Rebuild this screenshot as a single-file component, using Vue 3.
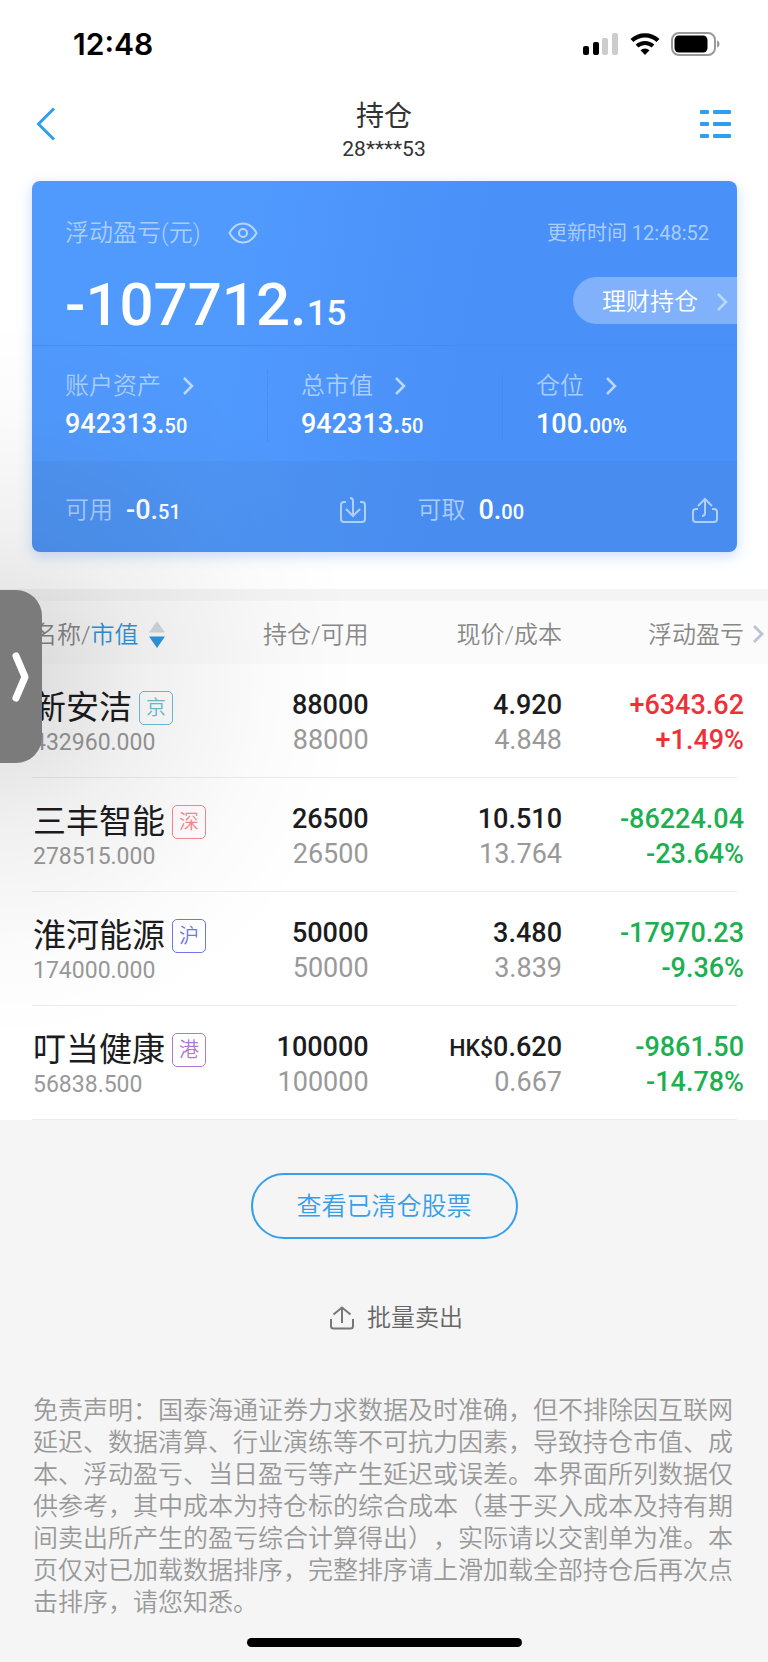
<script setup>
import { ref } from 'vue'

const stats = [
  { label: '账户资产', whole: '942313.', decimal: '50' },
  { label: '总市值', whole: '942313.', decimal: '50' },
  { label: '仓位', whole: '100.', decimal: '00%' },
]

const holdings = ref([
  { name: '新安洁', market: '京', tag: 'bj', value: '432960.000', amount: '88000', usable: '88000', unit: '', price: '4.920', cost: '4.848', profit: '+6343.62', rate: '+1.49%' },
  { name: '三丰智能', market: '深', tag: 'sz', value: '278515.000', amount: '26500', usable: '26500', unit: '', price: '10.510', cost: '13.764', profit: '-86224.04', rate: '-23.64%' },
  { name: '淮河能源', market: '沪', tag: 'sh', value: '174000.000', amount: '50000', usable: '50000', unit: '', price: '3.480', cost: '3.839', profit: '-17970.23', rate: '-9.36%' },
  { name: '叮当健康', market: '港', tag: 'hk', value: '56838.500', amount: '100000', usable: '100000', unit: 'HK$', price: '0.620', cost: '0.667', profit: '-9861.50', rate: '-14.78%' },
])

function trend(profit) {
  return profit.startsWith('+') ? 'up' : 'down'
}
</script>

<template>
  <div class="page" lang="zh-CN">
    <div class="top">
      <div class="status-bar">
        <span class="clock">12:48</span>
        <div class="status-icons">
          <svg width="36" height="22" viewBox="0 0 36 22">
            <rect x="0" y="13" width="6" height="9" rx="2" fill="#000" />
            <rect x="10" y="9" width="6" height="13" rx="2" fill="#000" />
            <rect x="19" y="5" width="6" height="17" rx="2" fill="#ccc" />
            <rect x="29" y="0" width="6" height="22" rx="2" fill="#ccc" />
          </svg>
          <svg width="30" height="22" viewBox="0 0 30 22">
            <path d="M2 7.5a19 19 0 0 1 26 0" fill="none" stroke="#000" stroke-width="4.4" />
            <path d="M7 13a12 12 0 0 1 16 0" fill="none" stroke="#000" stroke-width="4" />
            <path d="M10.5 17.2a6.6 6.6 0 0 1 9 0L15 22z" fill="#000" />
          </svg>
          <svg width="49" height="24" viewBox="0 0 49 24">
            <rect x="1" y="1" width="43" height="22" rx="7" fill="none" stroke="#999" stroke-width="2" />
            <rect x="3.5" y="3.5" width="33" height="17" rx="4.5" fill="#000" />
            <path d="M46 8.5c3.4 1.2 3.4 5.8 0 7z" fill="#999" />
          </svg>
        </div>
      </div>

      <header class="nav">
        <button class="nav-btn" type="button" aria-label="返回">
          <svg width="20" height="34" viewBox="0 0 20 34">
            <path d="M18 1.5L2.5 17L18 32.5" fill="none" stroke="#2f9df0" stroke-width="3" />
          </svg>
        </button>
        <div class="nav-title">
          <h1>持仓</h1>
          <p>28****53</p>
        </div>
        <button class="nav-btn nav-menu" type="button" aria-label="菜单">
          <svg width="32" height="28" viewBox="0 0 32 28" fill="#2f9df0">
            <rect x="0" y="0" width="9" height="4" rx="1" />
            <rect x="13" y="0" width="18" height="4" rx="1" />
            <rect x="0" y="12" width="9" height="4" rx="1" />
            <rect x="13" y="12" width="18" height="4" rx="1" />
            <rect x="0" y="24" width="9" height="4" rx="1" />
            <rect x="13" y="24" width="18" height="4" rx="1" />
          </svg>
        </button>
      </header>

      <section class="card">
        <div class="summary">
          <div class="summary-head">
            <span class="label">浮动盈亏(元)</span>
            <button class="eye" type="button" aria-label="隐藏金额">
              <svg width="30" height="22" viewBox="0 0 30 22" fill="none" stroke="#b9d5fd" stroke-width="2">
                <path d="M1.5 11C5 4.5 9.5 1.5 15 1.5S25 4.5 28.5 11C25 17.5 20.5 20.5 15 20.5S5 17.5 1.5 11z" />
                <circle cx="15" cy="11" r="4" />
              </svg>
            </button>
            <span class="update">更新时间 12:48:52</span>
          </div>
          <div class="summary-body">
            <strong class="total">-107712.<small>15</small></strong>
            <a class="wealth" href="#">
              理财持仓
              <svg class="arrow" width="12" height="20" viewBox="0 0 12 20"><path d="M2 2l8 8l-8 8" /></svg>
            </a>
          </div>
        </div>

        <div class="stats">
          <div v-for="item in stats" :key="item.label" class="stat">
            <a class="label" href="#">
              {{ item.label }}
              <svg class="arrow" width="12" height="20" viewBox="0 0 12 20"><path d="M2 2l8 8l-8 8" /></svg>
            </a>
            <div class="num">{{ item.whole }}<small>{{ item.decimal }}</small></div>
          </div>
        </div>

        <div class="funds">
          <div class="fund">
            <span class="label">可用</span>
            <span class="num">-0.<small>51</small></span>
            <button type="button" aria-label="转入">
              <svg class="line-icon" width="26" height="26" viewBox="0 0 26 26">
                <path d="M6 5H4a3 3 0 0 0-3 3v14a3 3 0 0 0 3 3h18a3 3 0 0 0 3-3V8a3 3 0 0 0-3-3h-2" />
                <path d="M10 1c2 0 3 1 3 3v14M6 12l7 7l7-7" />
              </svg>
            </button>
          </div>
          <div class="fund">
            <span class="label">可取</span>
            <span class="num">0.<small>00</small></span>
            <button type="button" aria-label="转出">
              <svg class="line-icon" width="26" height="26" viewBox="0 0 26 26">
                <path d="M6 12H4a3 3 0 0 0-3 3v7a3 3 0 0 0 3 3h18a3 3 0 0 0 3-3v-7a3 3 0 0 0-3-3h-2" />
                <path d="M10 19c2 0 3-1 3-3V2M6 9l7-7l7 7" />
              </svg>
            </button>
          </div>
        </div>
      </section>
    </div>

    <table class="holdings">
      <thead>
        <tr>
          <th class="col-name">
            <button type="button" class="sort">
              名称/<em>市值</em>
              <svg width="16" height="27" viewBox="0 0 16 27">
                <path d="M8 0l8 11.5H0z" fill="#d0d8e0" />
                <path d="M8 27l8-11.5H0z" fill="#2f96e0" />
              </svg>
            </button>
          </th>
          <th class="col-amount">持仓/可用</th>
          <th>现价/成本</th>
          <th class="col-profit">
            浮动盈亏
            <svg class="more" width="12" height="20" viewBox="0 0 12 20"><path d="M2 2l8 8l-8 8" /></svg>
          </th>
        </tr>
      </thead>
      <tbody>
        <tr v-for="item in holdings" :key="item.name">
          <td class="col-name">
            <div class="name">{{ item.name }}<span class="tag" :class="item.tag">{{ item.market }}</span></div>
            <div class="value">{{ item.value }}</div>
          </td>
          <td>
            <div>{{ item.amount }}</div>
            <div class="sub">{{ item.usable }}</div>
          </td>
          <td>
            <div><span v-if="item.unit" class="unit">{{ item.unit }}</span>{{ item.price }}</div>
            <div class="sub">{{ item.cost }}</div>
          </td>
          <td class="col-profit" :class="trend(item.profit)">
            <div>{{ item.profit }}</div>
            <div>{{ item.rate }}</div>
          </td>
        </tr>
      </tbody>
    </table>

    <div class="actions">
      <button class="cleared" type="button">查看已清仓股票</button>
      <button class="batch" type="button">
        <svg width="26" height="24" viewBox="0 0 26 24" fill="none" stroke="#777" stroke-width="2">
          <path d="M2 13v7a2.5 2.5 0 0 0 2.5 2.5h17a2.5 2.5 0 0 0 2.5-2.5v-7" />
          <path d="M13 17V2M4.5 8.5L13 1.5l8.5 7" />
        </svg>
        批量卖出
      </button>
    </div>

    <p class="disclaimer">免责声明：国泰海通证券力求数据及时准确，但不排除因互联网延迟、数据清算、行业演练等不可抗力因素，导致持仓市值、成本、浮动盈亏、当日盈亏等产生延迟或误差。本界面所列数据仅供参考，其中成本为持仓标的综合成本（基于买入成本及持有期间卖出所产生的盈亏综合计算得出），实际请以交割单为准。本页仅对已加载数据排序，完整排序请上滑加载全部持仓后再次点击排序，请您知悉。</p>

    <div class="home-bar"></div>

    <!-- floating drawer handle and the shade around it -->
    <div class="shade"></div>
    <button class="drawer" type="button" aria-label="展开">
      <svg width="18" height="50" viewBox="0 0 18 50">
        <path d="M4 4l9 21l-9 21" fill="none" stroke="#fff" stroke-width="7" stroke-linecap="round" stroke-linejoin="round" />
      </svg>
    </button>
  </div>
</template>

<style>
body {
  margin: 0;
  background: #f5f5f5;
}
</style>

<style scoped>
.page {
  position: relative;
  overflow: hidden;
  min-height: 100vh;
  font-family: Roboto, "Noto Sans CJK SC", sans-serif;
  font-size: 24px;
  font-weight: 350;
  line-height: 32px;
  color: #1c1c1e;
  background: #f5f5f5;
}

button {
  margin: 0;
  padding: 0;
  border: 0;
  background: none;
  font: inherit;
  color: inherit;
  cursor: pointer;
}

a {
  color: inherit;
  text-decoration: none;
}

svg {
  display: block;
  flex: none;
}

.top {
  padding-bottom: 37px;
  background: #fff;
}

.status-bar {
  display: flex;
  align-items: center;
  justify-content: space-between;
  height: 88px;
  padding: 0 48px 0 73px;
}

.clock {
  font-family: Inter, sans-serif;
  font-size: 30px;
  font-weight: 600;
  color: #000;
}

.status-icons {
  display: flex;
  align-items: center;
  gap: 11px;
}

.nav {
  display: flex;
  align-items: flex-start;
  justify-content: space-between;
  height: 93px;
  padding: 0 36px;
}

.nav-btn {
  display: flex;
  align-items: center;
  width: 48px;
  height: 72px;
}

.nav-menu {
  justify-content: flex-end;
}

.nav-title {
  padding-top: 12px;
  text-align: center;
  color: #333;
}

.nav-title h1 {
  margin: 0;
  font-size: 28px;
  font-weight: 400;
  line-height: 34px;
}

.nav-title p {
  margin: 0;
  font-size: 21px;
  font-weight: 400;
  line-height: 30px;
}

.card {
  margin: 0 31px 0 32px;
  border-radius: 8px;
  overflow: hidden;
  color: #fff;
  background: linear-gradient(100deg, #5099fd 30%, #4990f8 60%);
  box-shadow: 0 4px 14px rgba(74, 144, 248, 0.3);
}

.label {
  display: flex;
  align-items: center;
  gap: 21px;
  color: #abcdfd;
}

.arrow path {
  fill: none;
  stroke: #bdd8fe;
  stroke-width: 2.5;
}

.summary {
  padding: 36px 0 10px 33px;
  border-bottom: 1px solid #478ced;
}

.summary-head {
  display: flex;
  align-items: center;
  height: 32px;
  padding-right: 28px;
}

.eye {
  margin-left: 27px;
}

.update {
  margin-left: auto;
  font-size: 20px;
  font-weight: 400;
  color: #abcdfd;
}

.summary-body {
  display: flex;
  align-items: flex-start;
  justify-content: space-between;
  margin-top: 26px;
}

.total {
  height: 60px;
  font-size: 60px;
  font-weight: 500;
  line-height: 60px;
}

.total small {
  font-size: 35px;
  line-height: 35px;
}

.wealth {
  display: flex;
  align-items: center;
  gap: 18px;
  height: 47px;
  margin-top: 2px;
  padding: 2px 9px 0 29px;
  box-sizing: border-box;
  border-radius: 24px 0 0 24px;
  background: rgba(255, 255, 255, 0.3);
}

.stats {
  display: grid;
  grid-template-columns: repeat(3, 1fr);
  padding: 24px 0 20px;
}

.stat {
  padding-left: 33px;
}

.stat + .stat {
  border-left: 1px dotted #4387e8;
}

.stat .num {
  margin-top: 5px;
}

.num {
  font-size: 27px;
  font-weight: 500;
  line-height: 34px;
}

.num small {
  font-size: 20px;
  line-height: 20px;
}

.funds {
  display: grid;
  grid-template-columns: 1fr 1fr;
  background: rgba(70, 120, 190, 0.15);
}

.fund {
  display: flex;
  align-items: center;
  height: 91px;
  padding: 6px 19px 0 33px;
  box-sizing: border-box;
}

.fund .num {
  margin-left: 13px;
}

.fund button {
  margin-left: auto;
}

.line-icon path {
  fill: none;
  stroke: #b0cffa;
  stroke-width: 2;
}

.holdings {
  width: 100%;
  table-layout: fixed;
  border-collapse: separate;
  border-spacing: 0;
  border-top: 12px solid #f4f4f4;
  background: #fff;
}

.holdings th {
  height: 63px;
  padding: 4px 0 0;
  box-sizing: border-box;
  font-weight: 350;
  text-align: right;
  color: #888;
  background: #fbfbfb;
}

.holdings .col-name {
  width: 29%;
  padding-left: 33px;
  box-sizing: border-box;
  text-align: left;
}

.col-amount {
  width: 19%;
}

.holdings .col-profit {
  position: relative;
  width: 206px;
  padding-right: 24px;
  box-sizing: border-box;
}

.sort {
  display: flex;
  align-items: center;
}

.sort em {
  font-style: normal;
  color: #2f96e0;
}

.sort svg {
  margin-left: 10px;
}

.more {
  position: absolute;
  top: 23px;
  right: 4px;
}

.more path {
  fill: none;
  stroke: #b9c6d6;
  stroke-width: 3;
}

.holdings tbody tr {
  background: linear-gradient(#ececec, #ececec) 32px 100% / calc(100% - 63px) 1px no-repeat;
}

.holdings td {
  padding: 24px 0 20px;
  font-size: 27px;
  font-weight: 500;
  line-height: 35px;
  text-align: right;
}

.sub {
  font-weight: 400;
  color: #999;
}

.unit {
  font-size: 23px;
  line-height: 23px;
}

.up {
  color: #f03038;
}

.down {
  color: #1cb050;
}

.name {
  display: flex;
  align-items: center;
  height: 39px;
  font-size: 33px;
  font-weight: 400;
  white-space: nowrap;
}

.tag {
  width: 32px;
  margin-left: 7px;
  border: 1px solid currentColor;
  border-radius: 5px;
  font-size: 20px;
  font-weight: 350;
  line-height: 32px;
  text-align: center;
}

.bj {
  color: #6cc0d8;
}

.sz {
  color: #f88890;
}

.sh {
  color: #7078e8;
}

.hk {
  color: #b078d0;
}

.value {
  height: 31px;
  font-size: 23px;
  font-weight: 400;
  line-height: 31px;
  color: #999;
}

.actions {
  display: flex;
  flex-direction: column;
  align-items: center;
  padding-top: 53px;
}

.cleared {
  width: 267px;
  height: 66px;
  padding-top: 2px;
  border: 2px solid #359feb;
  border-radius: 33px;
  font-size: 25px;
  color: #359feb;
}

.batch {
  display: flex;
  align-items: center;
  gap: 12px;
  height: 40px;
  margin: 59px 0 0 24px;
  color: #666;
}

.disclaimer {
  margin: 57px 33px 19px;
  font-size: 25px;
  color: #999;
  text-spacing-trim: space-all;
}

.home-bar {
  width: 275px;
  height: 9px;
  margin: 0 auto 15px;
  border-radius: 5px;
  background: #000;
}

.shade {
  position: absolute;
  top: 320px;
  left: 0;
  width: 360px;
  height: 720px;
  background: radial-gradient(ellipse 100% 50% at 0 50%, rgba(0, 0, 0, 0.15), rgba(0, 0, 0, 0.06) 40%, rgba(0, 0, 0, 0.015) 75%, transparent);
  pointer-events: none;
}

.drawer {
  position: absolute;
  top: 590px;
  left: 0;
  display: flex;
  align-items: center;
  width: 42px;
  height: 173px;
  padding-left: 12px;
  border-radius: 0 26px 26px 0;
  background: #7b7b7b;
}
</style>
